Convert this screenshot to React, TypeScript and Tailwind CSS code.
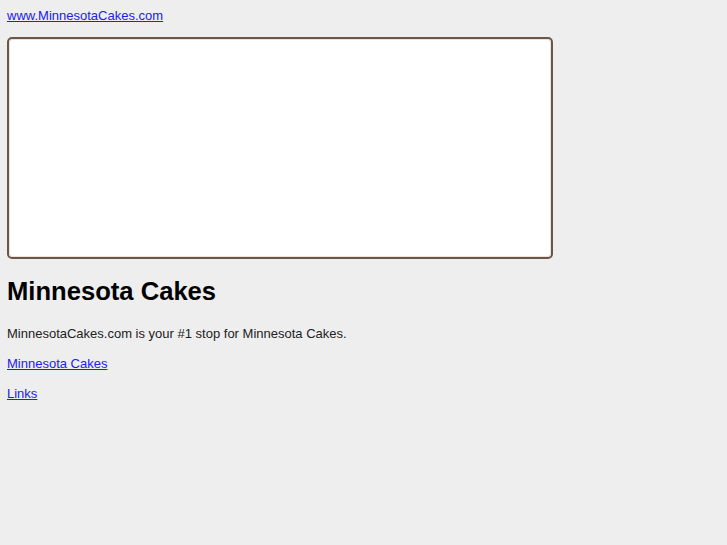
export default function App() {
  return (
    <div className="min-h-[545px] bg-[#eeeeee] px-[7px] pt-[8px] text-[13px] text-[#222222] [font-family:'Liberation_Sans',Arial,sans-serif]">
      <div className="leading-[15px]">
        <a href="#" className="text-[#2020ee] underline">www.MinnesotaCakes.com </a>
      </div>
      <div className="mt-[14px] h-[222px] w-[546px] rounded-[5px] border-2 border-[#6b5749] bg-white shadow-[inset_0_0_0_1px_#eae3dc]"></div>
      <h1 className="mt-[17px] text-[25.6px] font-bold leading-[30px] text-black">Minnesota Cakes</h1>
      <p className="mt-[20px] leading-[15px]">MinnesotaCakes.com is your #1 stop for Minnesota Cakes.</p>
      <p className="mt-[15px] leading-[15px]"><a href="#" className="text-[#2020ee] underline">Minnesota Cakes</a></p>
      <p className="mt-[15px] leading-[15px]"><a href="#" className="text-[#2020ee] underline">Links</a></p>
    </div>
  );
}
